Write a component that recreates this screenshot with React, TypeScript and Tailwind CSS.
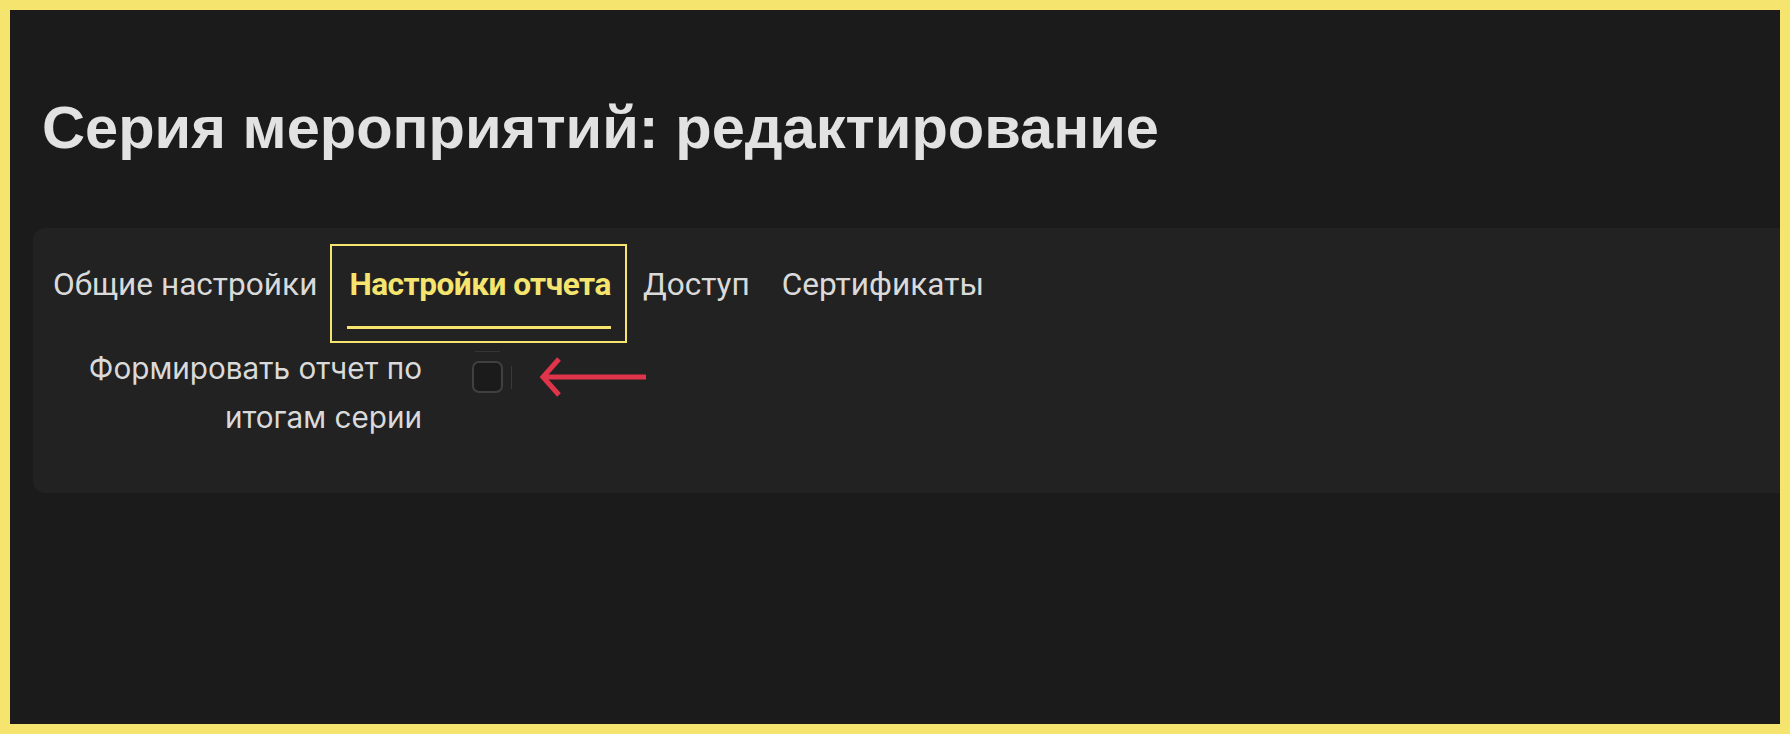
import React from "react";

const tabs = ["Общие настройки", "Настройки отчета", "Доступ", "Сертификаты"];

export default function App() {
  return (
    <div className="w-full h-[734px] bg-[#f5e56f] p-[10px]">
      <div className="h-full bg-[#1b1b1b] overflow-hidden pt-[88px]">
        <h1
          className="ml-[32px] text-[59.6px] leading-[60px] font-bold text-[#e2e2e2]"
          style={{ fontFamily: '"Liberation Sans", Arial, sans-serif' }}
        >
          Серия мероприятий: редактирование
        </h1>
        <div
          className="mt-[70px] ml-[23px] h-[265px] bg-[#222222] rounded-l-[12px] pl-[20px] pt-[41px]"
          style={{ fontFamily: 'Roboto, "Noto Sans", sans-serif' }}
        >
          <div className="flex items-start gap-[32px]">
            {tabs.map((t, i) => {
              const active = i === 1;
              return (
                <div key={t} className="relative flex flex-col">
                  <span
                    className={
                      "text-[31.6px] leading-[32px] whitespace-nowrap " +
                      (active ? "font-bold text-[#f5e56f] tracking-[-0.5px]" : "text-[#dadada]")
                    }
                  >
                    {t}
                  </span>
                  {active && (
                    <>
                      <div className="mt-[25px] h-[3px] bg-[#f5e56f] -ml-[2px]" />
                      <div className="absolute -left-[19px] -right-[16px] -top-[25px] -bottom-[14px] border-2 border-[#f5e56f] pointer-events-none" />
                    </>
                  )}
                </div>
              );
            })}
          </div>
          <div className="mt-[15px] flex items-start">
            <div
              className="w-[369px] text-right text-[29.7px] leading-[49px] text-[#dadada]"
              style={{ fontFamily: 'Inter, Roboto, sans-serif' }}
            >
              Формировать отчет по
              <br />
              итогам серии
            </div>
            <div className="ml-[50px] mt-[12px] flex items-center">
              <div className="relative">
                <div className="absolute -top-[10px] left-[3px] w-[25px] h-px bg-[#353535]" />
                <div className="w-[31px] h-[32px] rounded-[7px] border-2 border-[#404040] bg-[#1b1b1b]" />
              </div>
              <div className="ml-[8px] w-px h-[23px] bg-[#3b3a2c]" />
              <svg
                className="ml-[26px]"
                width="110"
                height="42"
                viewBox="0 0 110 42"
                fill="none"
              >
                <line x1="6" y1="21" x2="108" y2="21" stroke="#e0344a" strokeWidth="5" />
                <polyline
                  points="21,3 5,21 21,39"
                  stroke="#e0344a"
                  strokeWidth="5"
                  strokeLinejoin="miter"
                  fill="none"
                />
              </svg>
            </div>
          </div>
        </div>
      </div>
    </div>
  );
}
